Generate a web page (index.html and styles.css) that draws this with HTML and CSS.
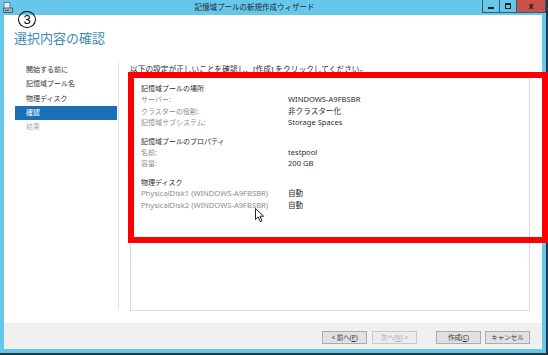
FILE: index.html
```html
<!DOCTYPE html>
<html>
<head>
  <title>記憶域プールの新規作成ウィザード</title>
  <link rel="stylesheet" href="styles.css">
</head>
<body>
  <div class="window">
    <div class="titlebar">
      <svg class="app-icon" width="10" height="11" viewBox="0 0 10 11">
        <rect x="1" y="0.5" width="6" height="7" fill="#e8eef2" stroke="#6a7f8c"/>
        <rect x="0.5" y="6" width="9" height="4.5" fill="#9fb6c4" stroke="#4f6675"/>
        <rect x="2" y="8" width="4" height="1" fill="#2f5f80"/>
      </svg>
      <span class="title">記憶域プールの新規作成ウィザード</span>
      <div class="controls">
        <span class="ctl min"><i></i></span>
        <span class="ctl max"><i></i></span>
        <span class="ctl close">x</span>
      </div>
    </div>
    <div class="client">
      <h1 class="page-title">選択内容の確認</h1>
      <div class="wizard">
        <ul class="steps">
          <li>開始する前に</li>
          <li>記憶域プール名</li>
          <li>物理ディスク</li>
          <li class="active">確認</li>
          <li class="disabled">結果</li>
        </ul>
        <div class="main">
          <p class="intro">以下の設定が正しいことを確認し、[作成] をクリックしてください。</p>
          <div class="summary">
            <section class="group">
              <h2>記憶域プールの場所</h2>
              <dl class="rows">
                <dt>サーバー:</dt><dd>WINDOWS-A9FBSBR</dd>
                <dt>クラスターの役割:</dt><dd>非クラスター化</dd>
                <dt>記憶域サブシステム:</dt><dd>Storage Spaces</dd>
              </dl>
            </section>
            <section class="group">
              <h2>記憶域プールのプロパティ</h2>
              <dl class="rows">
                <dt>名前:</dt><dd>testpool</dd>
                <dt>容量:</dt><dd>200 GB</dd>
              </dl>
            </section>
            <section class="group">
              <h2>物理ディスク</h2>
              <dl class="rows">
                <dt class="latin">PhysicalDisk1 (WINDOWS-A9FBSBR)</dt><dd>自動</dd>
                <dt class="latin">PhysicalDisk2 (WINDOWS-A9FBSBR)</dt><dd>自動</dd>
              </dl>
            </section>
          </div>
        </div>
      </div>
      <div class="footer">
        <button class="btn">&lt; 前へ(<u>P</u>)</button>
        <button class="btn off">次へ(<u>N</u>) &gt;</button>
        <button class="btn create">作成(<u>C</u>)</button>
        <button class="btn cancel">キャンセル</button>
      </div>
    </div>
  </div>

  <!-- annotations drawn over the screenshot -->
  <div class="mark-num">3</div>
  <div class="mark-box"></div>
  <svg class="cursor" width="10" height="15" viewBox="0 0 10 15">
    <path d="M0.5 0.5 L0.5 11.5 L3.2 8.9 L5.2 13.6 L7 12.8 L5 8.2 L8.6 8.2 Z" fill="#fff" stroke="#222" stroke-width="1" stroke-linejoin="round"/>
  </svg>
</body>
</html>
```

FILE: styles.css
```css
body {
  margin: 0;
  padding: 0;
  width: 548px;
  height: 355px;
  overflow: hidden;
  position: relative;
  background-color: #22394a;
  font-family: "Noto Sans", "Noto Sans CJK JP", sans-serif;
  font-size: 7px;
  color: #333333;
}

.window {
  width: 546px;
  height: 353px;
  background-color: #67c7eb;
  display: flex;
  flex-direction: column;
}

.titlebar {
  height: 15px;
  display: flex;
  align-items: flex-start;
  flex-shrink: 0;
}

.app-icon {
  margin: 2px 0 0 3px;
}

.title {
  flex: 1;
  text-align: center;
  font-size: 7.5px;
  line-height: 14px;
  color: #1c2a33;
  margin-left: 14px;
}

.controls {
  display: flex;
  height: 13px;
}

.ctl {
  height: 12px;
  border: 1px solid #3d5a68;
  border-top: none;
  display: flex;
  align-items: center;
  justify-content: center;
  box-sizing: content-box;
}

.ctl.min,
.ctl.max {
  width: 16px;
  border-right: none;
}

.ctl.min i {
  width: 6px;
  height: 2px;
  margin-top: 3px;
  background-color: #1a1a1a;
}

.ctl.max i {
  width: 4px;
  height: 3px;
  border: 1px solid #1a1a1a;
  border-top-width: 2px;
}

.ctl.close {
  width: 28px;
  background-color: #c9504b;
  color: #1a1a1a;
  font-weight: bold;
  font-size: 8px;
  line-height: 12px;
}

.client {
  flex: 1;
  margin: 0 4px 4px 4px;
  background-color: #ffffff;
  display: flex;
  flex-direction: column;
}

.page-title {
  margin: 0;
  padding: 13px 0 15px 10px;
  font-size: 13px;
  line-height: 19px;
  font-weight: normal;
  color: #4188b3;
  font-family: "Noto Sans CJK JP", sans-serif;
}

.wizard {
  flex: 1;
  display: flex;
}

.steps {
  list-style: none;
  margin: 0 0 13px 11px;
  padding: 1px 1px 0 0;
  width: 102px;
  border-right: 1px solid #e4e4e4;
}

.steps li {
  height: 14.25px;
  line-height: 14.25px;
  padding-left: 11px;
  color: #333333;
}

.steps li.active {
  background-color: #1b6fb4;
  color: #ffffff;
}

.steps li.disabled {
  color: #b3b3b3;
}

.main {
  flex: 1;
  display: flex;
  flex-direction: column;
  padding: 0 12px 12px 11px;
}

.intro {
  margin: 1px 0 2px 0;
  line-height: 12px;
  font-size: 7.7px;
  color: #2b2b2b;
}

.summary {
  flex: 1;
  border: 1px solid #dcdcdc;
  padding: 5px 10px;
}

.group + .group {
  margin-top: 7.5px;
}

.group h2 {
  margin: 0;
  font-size: 7px;
  font-weight: normal;
  line-height: 11.3px;
  color: #2b2b2b;
}

.rows {
  margin: 0;
  display: grid;
  grid-template-columns: 147px auto;
  line-height: 11.3px;
}

.rows dt {
  color: #8c8c8c;
}

.rows dt.latin {
  font-size: 7.6px;
}

.rows dd {
  margin: 0;
  font-size: 7.6px;
  color: #2b2b2b;
}

.footer {
  height: 26px;
  flex-shrink: 0;
  background-color: #f0f0f0;
  display: flex;
  justify-content: flex-end;
  align-items: flex-start;
  padding: 8px 12px 0 0;
  box-sizing: border-box;
}

.btn {
  width: 45px;
  height: 13px;
  padding: 0;
  margin: 0;
  border: 1px solid #acacac;
  background-color: #e1e1e1;
  font-family: "Noto Sans", "Noto Sans CJK JP", sans-serif;
  font-size: 6.5px;
  line-height: 11px;
  color: #333333;
}

.btn.off {
  margin-left: 5px;
  border-color: #c8c8c8;
  background-color: #ececec;
  color: #a8a8a8;
}

.btn.create {
  margin-left: 19px;
}

.btn.cancel {
  margin-left: 4px;
}

.mark-num {
  position: absolute;
  left: 18px;
  top: 11px;
  width: 18px;
  height: 17px;
  box-sizing: border-box;
  border: 1px solid #000000;
  border-radius: 50%;
  display: flex;
  align-items: center;
  justify-content: center;
  font-family: "Liberation Sans", sans-serif;
  font-size: 13px;
  line-height: 15px;
  color: #000000;
}

.mark-box {
  position: absolute;
  left: 128px;
  top: 72px;
  width: 420px;
  height: 171px;
  box-sizing: border-box;
  border: 6px solid #ff0000;
}

.cursor {
  position: absolute;
  left: 255px;
  top: 208px;
}
```
